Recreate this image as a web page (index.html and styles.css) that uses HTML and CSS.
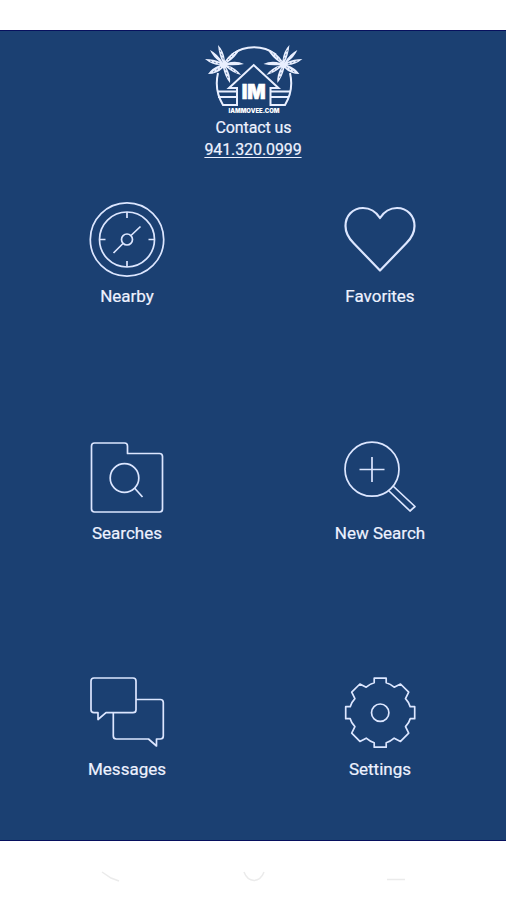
FILE: index.html
```html
<!DOCTYPE html>
<html lang="en">
<head>
    <meta charset="UTF-8">
    <meta name="viewport" content="width=device-width, initial-scale=1.0">
    <title>Home</title>
    <link rel="stylesheet" href="styles.css">
</head>

<body>
<main class="app">
    <header class="contact">
        <svg class="logo" viewBox="0 0 101 73">
            <defs>
                <!-- one palm crown, mirrored for the right side -->
                <g id="palm">
                    <path d="M20 20Q16 13 15 2Q21 8 22 18Q27 10 37 6Q33 14 24 20Q33 17 41 21Q33 23 24 22Q33 25 38 32Q30 30 23 24Q28 32 27 40Q22 34 20 25Q14 31 5 31Q9 25 17 22Q9 22 2 16Q11 16 17 19Q10 14 7 7Q15 11 20 20Z"/>
                    <path class="vein" d="M17 7L21 18M32 10L23 19M7 18L17 21M10 29L18 24M25 35L22 25M34 30L25 23"/>
                </g>
            </defs>
            <path class="line" d="M29 11.500A37 37 0 0 1 73 11.500M15 30Q11 47 20 62H34V45H26L50.700 22L75.500 45H67.500V62H82Q91 47 87 30"/>
            <path class="line" d="M14 48.500H33M15 54H33M68 48.500H87M68 54H86"/>
            <use href="#palm"/>
            <use href="#palm" transform="translate(101.400 0) scale(-1 1)"/>
            <text class="initials" x="50.700" y="55.500" textLength="24" lengthAdjust="spacingAndGlyphs">IM</text>
            <text class="site" x="51" y="69.800" textLength="51" lengthAdjust="spacingAndGlyphs">IAMMOVEE.COM</text>
        </svg>
        <p>Contact us</p>
        <a class="phone" href="tel:9413200999">941.320.0999</a>
    </header>

    <nav class="menu">
        <a class="item" href="#">
            <svg class="icon" viewBox="-0.5 0 80 80">
                <circle cx="40.500" cy="39.500" r="36.700"/>
                <circle cx="40.500" cy="39.500" r="27.500"/>
                <circle cx="40.500" cy="39.500" r="5.500"/>
                <path d="M44.500 35.500L54 26.500M36.500 43.500L27 53M40.500 12V18M40.500 61V67M13 39.500H19M62 39.500H68"/>
            </svg>
            <span>Nearby</span>
        </a>
        <a class="item" href="#">
            <svg class="icon" viewBox="-0.5 0 80 80">
                <path class="bold" d="M40.500 18C36 11 30 8 23.500 8C13 8 6 16 6 26C6 33 9 38 14 43L40.500 70.500L67 43C72 38 75 33 75 26C75 16 68 8 57.500 8C51 8 45 11 40.500 18Z"/>
            </svg>
            <span>Favorites</span>
        </a>
        <a class="item" href="#">
            <svg class="icon" viewBox="-0.5 0 80 80">
                <path d="M8 6H38Q41 6 41 9V16.500H73Q76 16.500 76 19.500V72Q76 75 73 75H8Q5 75 5 72V9Q5 6 8 6Z"/>
                <circle cx="38" cy="41" r="14.300"/>
                <path d="M48 51L56 60"/>
            </svg>
            <span>Searches</span>
        </a>
        <a class="item" href="#">
            <svg class="icon" viewBox="-0.5 0 80 80">
                <circle cx="32.500" cy="32.200" r="27"/>
                <path d="M32.500 20V45M20 32.500H45M49 53.500L70.500 74L75.500 69.500L53.500 49"/>
            </svg>
            <span>New Search</span>
        </a>
        <a class="item" href="#">
            <svg class="icon" viewBox="-0.5 0 80 80">
                <path d="M7.500 5H46.500Q49.500 5 49.500 8V36.700Q49.500 39.700 46.500 39.700H19.500L11.500 46.500V39.700H7.500Q4.500 39.700 4.500 36.700V8Q4.500 5 7.500 5Z"/>
                <path d="M49.500 26.500H73.800Q76.800 26.500 76.800 29.500V63Q76.800 66 73.800 66H70V73L62 66H29.800Q26.800 66 26.800 63V39.700"/>
            </svg>
            <span>Messages</span>
        </a>
        <a class="item" href="#">
            <svg class="icon" viewBox="-0.5 0 80 80">
                <g transform="translate(40.700 39.700)">
                    <path d="M-6 -34.500H6V-30Q10 -29 14 -25.500L20.300 -28.700L28.500 -20.500L25.300 -14Q29 -10 30 -6H34.500V6H30Q29 10 25.300 14L28.500 20.500L20.300 28.700L14 25.500Q10 29 6 30V34.500H-6V30Q-10 29 -14 25.500L-20.300 28.700L-28.500 20.500L-25.300 14Q-29 10 -30 6H-34.500V-6H-30Q-29 -10 -25.300 -14L-28.500 -20.500L-20.300 -28.700L-14 -25.500Q-10 -29 -6 -30Z"/>
                    <circle r="8.700"/>
                </g>
            </svg>
            <span>Settings</span>
        </a>
    </nav>
</main>

<footer class="navbar">
    <svg viewBox="0 0 20 12"><path d="M1 1L10 7L18 10"/></svg>
    <svg viewBox="0 0 24 12"><path d="M2 1Q5 9 12 9.500Q19 9 22 1"/></svg>
    <svg viewBox="0 0 20 12"><path d="M1 8.500H19"/></svg>
</footer>
</body>
</html>
```

FILE: styles.css
```css
body {
    margin: 0;
    padding-top: 30px;
    background-color: #fff;
    font-family: Roboto, Arial, sans-serif;
    font-size: 17px;
}

.app {
    box-sizing: border-box;
    height: 811px;
    padding-top: 12px;
    background-color: #1b4072;
    border-top: 1px solid #07105e;
    border-bottom: 1px solid #07105e;
    color: #eef2ff;
}

.contact {
    display: flex;
    flex-direction: column;
    align-items: center;
    height: 157px;
    font-size: 16px;
    line-height: 21.5px;
}

.contact p {
    margin: 0;
    padding-left: 1px;
    letter-spacing: -0.1px;
}

.contact p,
.phone {
    -webkit-text-stroke: 0.2px;
}

.logo {
    width: 101px;
    height: 73px;
    margin-bottom: 1px;
    flex: none;
}

.logo .line {
    fill: none;
    stroke: #e9efff;
    stroke-width: 2;
}

#palm {
    fill: #e9efff;
}

#palm .vein {
    fill: none;
    stroke: #1b4072;
    stroke-width: 0.6;
    stroke-dasharray: 2 2;
}

.initials,
.site {
    fill: #fff;
    font-family: Inter, sans-serif;
    font-weight: 900;
    text-anchor: middle;
}

.initials {
    font-size: 20px;
    stroke: #fff;
    stroke-width: 0.6;
}

.site {
    font-size: 6px;
}

.phone {
    color: inherit;
    letter-spacing: -0.1px;
    text-decoration: underline;
    text-underline-offset: 2px;
}

.menu {
    display: grid;
    grid-template-columns: 1fr 1fr;
    grid-auto-rows: 236.5px;
}

.item {
    display: flex;
    flex-direction: column;
    align-items: center;
    gap: 5px;
    color: inherit;
    line-height: 22px;
    text-decoration: none;
}

.item span {
    padding-left: 1px;
    -webkit-text-stroke: 0.2px;
}

.icon {
    width: 80px;
    height: 80px;
    margin-right: 1px;
    fill: none;
    stroke: #dce6ff;
    stroke-width: 1.7;
    stroke-linejoin: round;
}

.icon .bold {
    stroke-width: 2.2;
}

/* Faint system buttons under the app */
.navbar {
    display: flex;
    justify-content: space-between;
    padding: 30px 100px 0 101px;
}

.navbar svg {
    height: 12px;
    fill: none;
    stroke: #ebebeb;
    stroke-width: 1.5;
}
```
